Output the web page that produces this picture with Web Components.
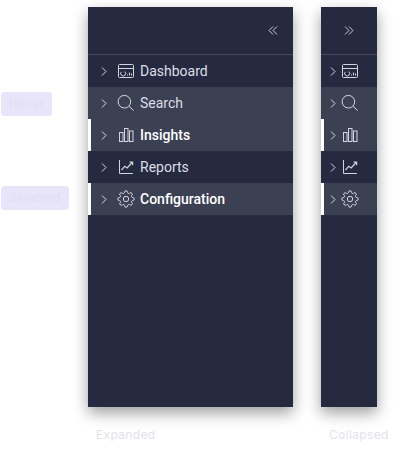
<!DOCTYPE html>
<html>
<head>
<meta charset="utf-8">
<title>Side navigation</title>
<style>
  html, body { margin: 0; padding: 0; background: #fff; }
  body { width: 400px; height: 457px; overflow: hidden; font-family: Roboto, "Liberation Sans", sans-serif; }
</style>
</head>
<body>
<nav-sheet>
  <div slot="legend">
    <state-tag style="margin-top:85px">Hover</state-tag>
    <state-tag style="margin-top:70px">Selected</state-tag>
  </div>

  <nav-panel style="margin-left:88px" caption="Expanded">
    <nav-item icon="dashboard">Dashboard</nav-item>
    <nav-item icon="search" state="hover">Search</nav-item>
    <nav-item icon="insights" state="selected">Insights</nav-item>
    <nav-item icon="reports">Reports</nav-item>
    <nav-item icon="config" state="selected">Configuration</nav-item>
  </nav-panel>

  <nav-panel style="margin-left:28px" caption="Collapsed" collapsed>
    <nav-item icon="dashboard" collapsed></nav-item>
    <nav-item icon="search" state="hover" collapsed></nav-item>
    <nav-item icon="insights" state="selected" collapsed></nav-item>
    <nav-item icon="reports" collapsed></nav-item>
    <nav-item icon="config" state="selected" collapsed></nav-item>
  </nav-panel>
</nav-sheet>

<script>
const ICONS = {
  dashboard: `<svg viewBox="0 0 18 18"><rect x="1.500" y="2.500" width="15" height="13" rx="1"/><path d="M1.500 6.500h15"/><path d="M7.800 9.600a2.500 2.500 0 1 1-3.600.3"/><path d="M10.500 12.500v1M12.500 10.500v3M14.500 11.500v2"/></svg>`,
  search: `<svg viewBox="0 0 18 18"><circle cx="7.400" cy="7.700" r="6.300"/><path d="M12 12.300l4.700 4.200"/></svg>`,
  insights: `<svg viewBox="0 0 18 18"><rect x="2.500" y="6.500" width="3.500" height="9"/><rect x="7.500" y="2.500" width="3.500" height="13"/><rect x="12.500" y="5" width="3.500" height="10.500"/></svg>`,
  reports: `<svg viewBox="0 0 18 18"><path d="M2.500 2v13.500h13.500"/><path d="M4.500 12l3.300-3.800 2.400 1.800 4.800-5.500" stroke-width="1.200"/><path d="M12.600 4.200h3v3" stroke-width="1.200"/></svg>`,
  config: `<svg viewBox="0 0 24 24" stroke-width="1.33"><circle cx="12" cy="12" r="3.600"/><path d="M19.400 15a1.650 1.650 0 0 0 .33 1.820l.06.06a2 2 0 0 1 0 2.830 2 2 0 0 1-2.830 0l-.06-.06a1.650 1.650 0 0 0-1.820-.33 1.650 1.650 0 0 0-1 1.510V21a2 2 0 0 1-2 2 2 2 0 0 1-2-2v-.09A1.650 1.650 0 0 0 9 19.400a1.650 1.650 0 0 0-1.820.33l-.06.06a2 2 0 0 1-2.830 0 2 2 0 0 1 0-2.830l.06-.06a1.650 1.650 0 0 0 .33-1.820 1.650 1.650 0 0 0-1.510-1H3a2 2 0 0 1-2-2 2 2 0 0 1 2-2h.09A1.650 1.650 0 0 0 4.600 9a1.650 1.650 0 0 0-.33-1.820l-.06-.06a2 2 0 0 1 0-2.830 2 2 0 0 1 2.830 0l.06.06a1.650 1.650 0 0 0 1.820.33H9a1.650 1.650 0 0 0 1-1.510V3a2 2 0 0 1 2-2 2 2 0 0 1 2 2v.09a1.650 1.650 0 0 0 1 1.510 1.650 1.650 0 0 0 1.820-.33l.06-.06a2 2 0 0 1 2.830 0 2 2 0 0 1 0 2.830l-.06.06a1.650 1.650 0 0 0-.33 1.820V9a1.650 1.650 0 0 0 1.510 1H21a2 2 0 0 1 2 2 2 2 0 0 1-2 2h-.09a1.650 1.650 0 0 0-1.510 1z"/></svg>`
}

class NavSheet extends HTMLElement {
  constructor(){
    super()
    this.attachShadow({mode: 'open'}).innerHTML = `
      <style>
        :host { display: flex; align-items: flex-start; padding-top: 7px; position: relative; }
        .legend { width: 88px; margin-right: -88px; padding-left: 1px; box-sizing: border-box; flex: none; }
      </style>
      <div class="legend"><slot name="legend"></slot></div>
      <slot></slot>
    `
  }
}

class StateTag extends HTMLElement {
  constructor(){
    super()
    this.attachShadow({mode: 'open'}).innerHTML = `
      <style>
        :host {
          display: block;
          width: fit-content;
          height: 24px;
          padding: 0 8px;
          background: #e8e5fb;
          color: #e0def2;
          border-radius: 4px;
          font: 400 12px/24px Inter, "Liberation Sans", sans-serif;
          letter-spacing: .3px;
        }
      </style>
      <slot></slot>
    `
  }
}

class NavPanel extends HTMLElement {
  constructor(){
    super()
    this.attachShadow({mode: 'open'})
  }

  connectedCallback(){
    const collapsed = this.hasAttribute('collapsed')
    this.shadowRoot.innerHTML = `
      <style>
        :host { display: block; flex: none; width: ${collapsed ? 56 : 205}px; }
        .panel {
          height: 400px;
          background: #252a40;
          box-shadow: 0 6px 14px rgba(0, 0, 0, .38);
        }
        .head {
          height: 48px;
          box-sizing: border-box;
          border-bottom: 1px solid #454958;
          display: flex;
          align-items: center;
          justify-content: ${collapsed ? 'center' : 'flex-end'};
          padding: 0 ${collapsed ? 0 : 15}px 0 0;
        }
        .head svg { width: 10px; height: 9px; fill: none; stroke: #c6c8d2; stroke-width: 1; display: block; }
        .items { display: flex; flex-direction: column; }
        .caption {
          margin: 20px 0 0 8px;
          font: 400 12px/16px Inter, "Liberation Sans", sans-serif;
          letter-spacing: .35px;
          color: #e2e3ec;
          white-space: nowrap;
        }
      </style>
      <div class="panel">
        <div class="head">
          <svg viewBox="0 0 10 9"><path d="${collapsed ? 'M1 .5l4 4-4 4M5 .5l4 4-4 4' : 'M5 .5l-4 4 4 4M9 .5l-4 4 4 4'}"/></svg>
        </div>
        <div class="items"><slot></slot></div>
      </div>
      <div class="caption">${this.getAttribute('caption')}</div>
    `
  }
}

class NavItem extends HTMLElement {
  constructor(){
    super()
    this.attachShadow({mode: 'open'})
  }

  connectedCallback(){
    const state = this.getAttribute('state') || ''
    const collapsed = this.hasAttribute('collapsed')
    this.shadowRoot.innerHTML = `
      <style>
        :host { display: block; }
        .row {
          height: 32px;
          display: flex;
          align-items: center;
          padding-left: ${collapsed ? 9 : 13}px;
          font: 400 14px/20px Roboto, "Liberation Sans", sans-serif;
          color: #dcdee6;
        }
        .row.hover, .row.selected { background: #3c4053; }
        .row.selected { box-shadow: inset 3px 0 0 #fff; color: #fff; font-weight: 500; }
        .arrow { width: 6px; height: 9px; margin-right: ${collapsed ? 5 : 10}px; flex: none; fill: none; stroke: #d3d5de; stroke-width: 1; }
        .icon { width: 18px; height: 18px; flex: none; margin-right: 5px; }
        .icon svg { width: 18px; height: 18px; display: block; fill: none; stroke: #d3d5de; stroke-width: 1; }
        .icon svg[stroke-width] { stroke-width: 1.33; }
      </style>
      <div class="row ${state}">
        <svg class="arrow" viewBox="0 0 6 9"><path d="M1 .5l4 4-4 4"/></svg>
        <span class="icon">${ICONS[this.getAttribute('icon')]}</span>
        <slot></slot>
      </div>
    `
  }
}

customElements.define('nav-sheet', NavSheet)
customElements.define('state-tag', StateTag)
customElements.define('nav-panel', NavPanel)
customElements.define('nav-item', NavItem)
</script>
</body>
</html>
